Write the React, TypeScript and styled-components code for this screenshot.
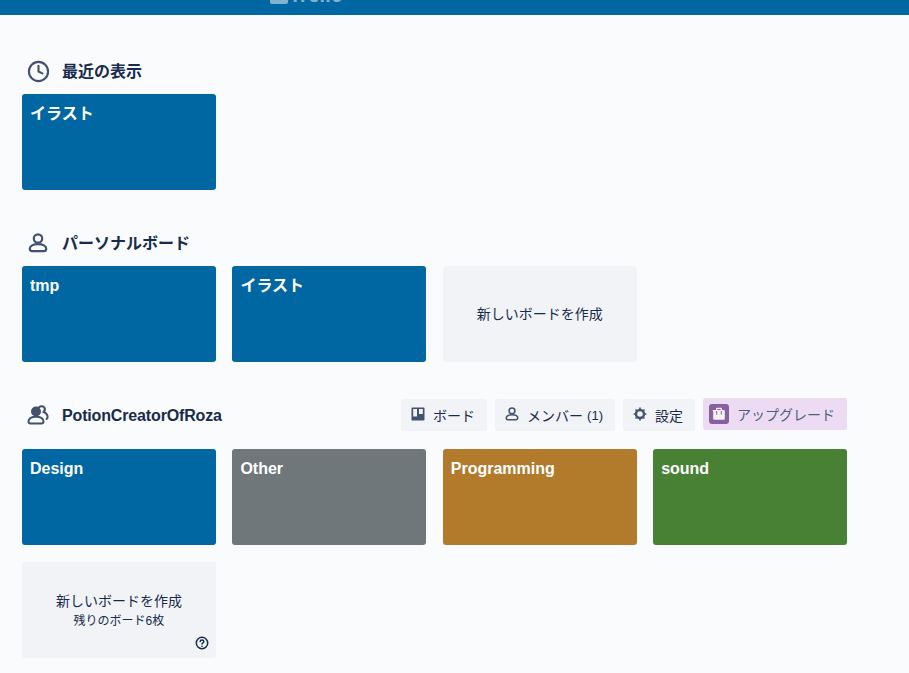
import React from "react";
import styled, { createGlobalStyle } from "styled-components";
import { Clock } from "lucide-react";

const GlobalStyle = createGlobalStyle`
  html, body {
    margin: 0;
    padding: 0;
    background: #fafbfc;
    color: #172b4d;
    font-family: "Liberation Sans", "Noto Sans CJK JP", sans-serif;
    font-size: 14px;
  }
`;

const TopBar = styled.header`
  height: 15px;
  background: #0067a3;
  overflow: hidden;
  display: flex;
  align-items: flex-end;
  padding-left: 270px;
`;

const Logo = styled.div`
  display: flex;
  align-items: flex-end;
  gap: 2px;
  height: 30px;
  margin-bottom: 11px;
  color: rgba(255, 255, 255, 0.5);
`;

const LogoMark = styled.span`
  display: block;
  width: 18px;
  height: 18px;
  border-radius: 2px;
  background: rgba(255, 255, 255, 0.5);
`;

const LogoText = styled.span`
  display: block;
  font-family: "Noto Sans", sans-serif;
  font-size: 18px;
  line-height: 18px;
  font-weight: 700;
  letter-spacing: 0.5px;
`;

const Main = styled.main`
  padding: 39px 0 0 22px;
  width: 825px;
`;

const Section = styled.section`
  margin-bottom: 36px;
`;

const SectionHead = styled.div<{ $team?: boolean }>`
  display: flex;
  align-items: center;
  height: 34px;
  margin-bottom: ${(p) => (p.$team ? "17px" : "6px")};
`;

const HeadIcon = styled.span`
  width: 32px;
  height: 24px;
  margin-right: 8px;
  display: flex;
  align-items: center;
  justify-content: center;
  color: #42526e;
`;

const Title = styled.h3`
  margin: 2px 0 0;
  font-size: 16px;
  line-height: 20px;
  font-weight: 700;
  color: #172b4d;
`;

const TeamTitle = styled(Title)`
  letter-spacing: -0.15px;
`;

const Actions = styled.div`
  margin-left: auto;
  display: flex;
  align-items: center;
  gap: 8px;
`;

const ActionButton = styled.a`
  display: flex;
  align-items: center;
  height: 32px;
  padding: 0 12px 0 10px;
  border-radius: 3px;
  background: #f2f3f6;
  color: #172b4d;
  font-size: 14px;
  white-space: nowrap;
  svg {
    margin-right: 8px;
    margin-top: -2px;
    color: #42526e;
  }
`;

const Count = styled.span`
  margin-left: 4px;
  font-size: 13px;
`;

const UpgradeButton = styled.a`
  display: flex;
  align-items: center;
  height: 32px;
  margin-top: -2px;
  padding: 0 12px 0 6px;
  border-radius: 3px;
  background: #eddbf4;
  color: #505f79;
  font-size: 14px;
  white-space: nowrap;
`;

const UpgradeIcon = styled.span`
  width: 20px;
  height: 20px;
  margin-right: 8px;
  border-radius: 3px;
  background: #89609e;
  color: #f4eef7;
  display: flex;
  align-items: center;
  justify-content: center;
`;

const BoardGrid = styled.div`
  display: grid;
  grid-template-columns: repeat(4, 23.5%);
  column-gap: 2%;
  row-gap: 17px;
`;

const BoardTile = styled.a<{ $color: string }>`
  display: block;
  height: 96px;
  box-sizing: border-box;
  padding: 9px 8px 8px;
  border-radius: 3px;
  background: ${(p) => p.$color};
  color: #fff;
  font-size: 16px;
  line-height: 22px;
  font-weight: 700;
`;

const CreateTile = styled.a`
  position: relative;
  height: 96px;
  display: flex;
  flex-direction: column;
  align-items: center;
  justify-content: center;
  border-radius: 3px;
  background: #f2f3f6;
  color: #172b4d;
  font-size: 14px;
  line-height: 20px;
`;

const Remaining = styled.span`
  font-size: 12px;
  line-height: 18px;
  margin-top: 1px;
`;

const HelpIcon = styled.span`
  position: absolute;
  right: 7px;
  bottom: 8px;
  display: flex;
  color: #172b4d;
`;

const BLUE = "#0067a3";

function PersonIcon({ size = 20 }: { size?: number }) {
  return (
    <svg width={size} height={size} viewBox="0 0 20 20" fill="none" stroke="currentColor" strokeWidth="2.2">
      <circle cx="10" cy="5.500" r="4.200" />
      <path d="M1.800 15.800C1.800 13 5.300 11.200 10 11.200s8.200 1.800 8.200 4.600c0 1.500-.8 2.400-2.200 2.400H4c-1.400 0-2.200-.9-2.200-2.400z" />
    </svg>
  );
}

function TeamIcon() {
  return (
    <svg width="22" height="22" viewBox="0 0 22 22" fill="none" stroke="currentColor" strokeWidth="2">
      <path d="M11.500 4C12.500 2 15.500 1.500 17 3.200c1.200 1.500.9 3.600-.4 4.800 2.200.9 4 2.500 4 4.800 0 1.400-.8 2.200-1.800 2.200" />
      <circle cx="9" cy="7.500" r="4" fill="currentColor" />
      <path d="M1.500 17.500c0-3 3.200-4.800 7.500-4.800s7.500 1.800 7.500 4.800c0 1.300-.7 2-2 2h-11c-1.300 0-2-.7-2-2z" />
    </svg>
  );
}

function BoardIcon() {
  return (
    <svg width="14" height="14" viewBox="0 0 14 14">
      <path
        fill="currentColor"
        fillRule="evenodd"
        d="M1.500 .5h11c.6 0 1 .4 1 1v11c0 .6-.4 1-1 1h-11c-.6 0-1-.4-1-1v-11c0-.6.400-1 1-1zM2.200 2v7.500h3.800V2zM8 2v5h3.800V2z"
      />
    </svg>
  );
}

function GearIcon() {
  return (
    <svg width="14" height="14" viewBox="0 0 14 14" fill="none" stroke="currentColor">
      <circle cx="7" cy="7" r="4" strokeWidth="2.400" />
      <path strokeWidth="1.600" d="M7 .6v1.500M7 11.900v1.500M.6 7h1.500M11.900 7h1.500M2.500 2.500l1 1M10.500 10.500l1 1M2.500 11.500l1-1M10.500 3.500l1-1" />
    </svg>
  );
}

function BagIcon() {
  return (
    <svg width="16" height="16" viewBox="0 0 16 16">
      <path
        fill="currentColor"
        fillRule="evenodd"
        d="M5 4V3c0-.8.500-1.300 1.300-1.300h3.400c.8 0 1.300.5 1.300 1.300v1h1.500c.8 0 1.300.5 1.300 1.300v7.200c0 .8-.5 1.300-1.300 1.300h-9c-.8 0-1.300-.5-1.300-1.300V5.300C1.200 4.500 1.700 4 2.500 4zm1.300 0h3.400V3H6.300zM5.200 5v3.500h1V5zm4.600 0v3.500h1V5z"
      />
    </svg>
  );
}

function HelpGlyph() {
  return (
    <svg width="14" height="14" viewBox="0 0 14 14" fill="none" stroke="currentColor" strokeWidth="1.500">
      <circle cx="7" cy="7" r="5.700" />
      <path strokeLinecap="round" d="M5.200 5.600C5.200 4.600 6 4 7 4s1.800.6 1.800 1.500c0 1.400-1.800 1.300-1.800 2.600" />
      <circle cx="7" cy="10.200" r=".5" fill="currentColor" strokeWidth=".6" />
    </svg>
  );
}

export default function App() {
  return (
    <>
      <GlobalStyle />
      <TopBar>
        <Logo>
          <LogoMark />
          <LogoText>Trello</LogoText>
        </Logo>
      </TopBar>
      <Main>
        <Section>
          <SectionHead>
            <HeadIcon>
              <Clock size={23} strokeWidth={2.2} />
            </HeadIcon>
            <Title>最近の表示</Title>
          </SectionHead>
          <BoardGrid>
            <BoardTile $color={BLUE}>イラスト</BoardTile>
          </BoardGrid>
        </Section>
        <Section>
          <SectionHead>
            <HeadIcon>
              <PersonIcon />
            </HeadIcon>
            <Title>パーソナルボード</Title>
          </SectionHead>
          <BoardGrid>
            <BoardTile $color={BLUE}>tmp</BoardTile>
            <BoardTile $color={BLUE}>イラスト</BoardTile>
            <CreateTile>新しいボードを作成</CreateTile>
          </BoardGrid>
        </Section>
        <Section>
          <SectionHead $team>
            <HeadIcon>
              <TeamIcon />
            </HeadIcon>
            <TeamTitle>PotionCreatorOfRoza</TeamTitle>
            <Actions>
              <ActionButton>
                <BoardIcon />
                ボード
              </ActionButton>
              <ActionButton>
                <PersonIcon size={14} />
                メンバー<Count>(1)</Count>
              </ActionButton>
              <ActionButton>
                <GearIcon />
                設定
              </ActionButton>
              <UpgradeButton>
                <UpgradeIcon>
                  <BagIcon />
                </UpgradeIcon>
                アップグレード
              </UpgradeButton>
            </Actions>
          </SectionHead>
          <BoardGrid>
            <BoardTile $color={BLUE}>Design</BoardTile>
            <BoardTile $color="#6f777b">Other</BoardTile>
            <BoardTile $color="#b27b2c">Programming</BoardTile>
            <BoardTile $color="#488133">sound</BoardTile>
            <CreateTile>
              新しいボードを作成
              <Remaining>残りのボード6枚</Remaining>
              <HelpIcon>
                <HelpGlyph />
              </HelpIcon>
            </CreateTile>
          </BoardGrid>
        </Section>
      </Main>
    </>
  );
}
